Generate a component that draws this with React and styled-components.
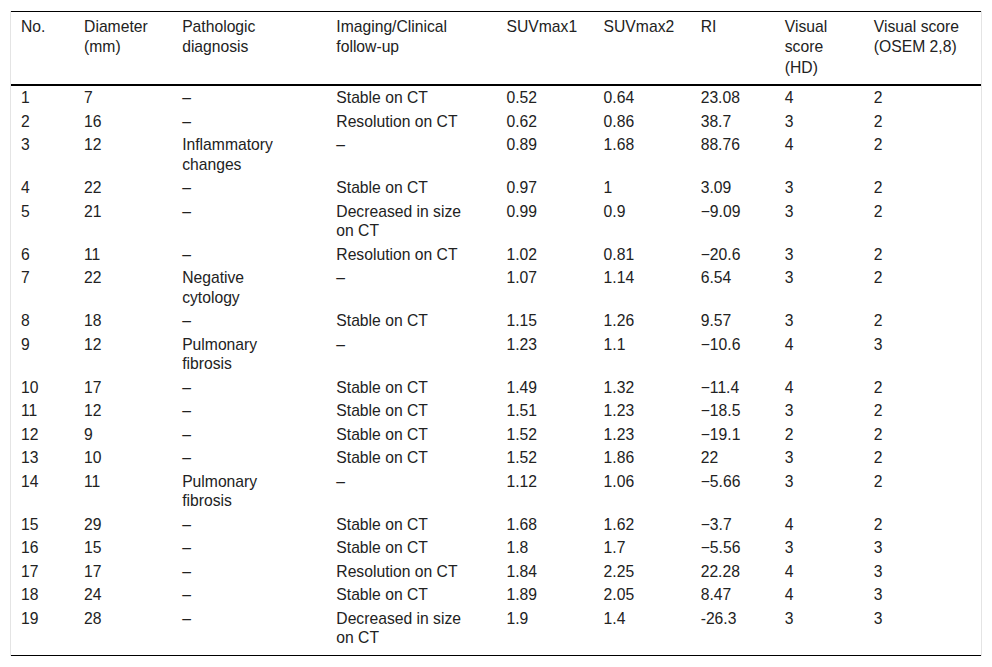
import React from "react";
import styled, { createGlobalStyle } from "styled-components";

const GlobalStyle = createGlobalStyle`
  body {
    margin: 0;
    background: #fff;
    font-family: "Liberation Sans", Arial, sans-serif;
  }
`;

const columns = [63, 98, 154, 170, 97, 97, 84, 89, 117];

const headers = [
  "No.",
  "Diameter (mm)",
  "Pathologic diagnosis",
  "Imaging/Clinical follow-up",
  "SUVmax1",
  "SUVmax2",
  "RI",
  "Visual score (HD)",
  "Visual score (OSEM 2,8)",
];

const rows = [
  ["1", "7", "–", "Stable on CT", "0.52", "0.64", "23.08", "4", "2"],
  ["2", "16", "–", "Resolution on CT", "0.62", "0.86", "38.7", "3", "2"],
  ["3", "12", "Inflammatory changes", "–", "0.89", "1.68", "88.76", "4", "2"],
  ["4", "22", "–", "Stable on CT", "0.97", "1", "3.09", "3", "2"],
  ["5", "21", "–", "Decreased in size on CT", "0.99", "0.9", "−9.09", "3", "2"],
  ["6", "11", "–", "Resolution on CT", "1.02", "0.81", "−20.6", "3", "2"],
  ["7", "22", "Negative cytology", "–", "1.07", "1.14", "6.54", "3", "2"],
  ["8", "18", "–", "Stable on CT", "1.15", "1.26", "9.57", "3", "2"],
  ["9", "12", "Pulmonary fibrosis", "–", "1.23", "1.1", "−10.6", "4", "3"],
  ["10", "17", "–", "Stable on CT", "1.49", "1.32", "−11.4", "4", "2"],
  ["11", "12", "–", "Stable on CT", "1.51", "1.23", "−18.5", "3", "2"],
  ["12", "9", "–", "Stable on CT", "1.52", "1.23", "−19.1", "2", "2"],
  ["13", "10", "–", "Stable on CT", "1.52", "1.86", "22", "3", "2"],
  ["14", "11", "Pulmonary fibrosis", "–", "1.12", "1.06", "−5.66", "3", "2"],
  ["15", "29", "–", "Stable on CT", "1.68", "1.62", "−3.7", "4", "2"],
  ["16", "15", "–", "Stable on CT", "1.8", "1.7", "−5.56", "3", "3"],
  ["17", "17", "–", "Resolution on CT", "1.84", "2.25", "22.28", "4", "3"],
  ["18", "24", "–", "Stable on CT", "1.89", "2.05", "8.47", "4", "3"],
  ["19", "28", "–", "Decreased in size on CT", "1.9", "1.4", "-26.3", "3", "3"],
];

export default function App() {
  return (
    <>
      <GlobalStyle />
      <Frame>
        <Table>
          <colgroup>
            {columns.map((w, i) => (
              <col key={i} style={{ width: w }} />
            ))}
          </colgroup>
          <thead>
            <tr>
              {headers.map((h) => (
                <Th key={h}>{h}</Th>
              ))}
            </tr>
          </thead>
          <tbody>
            {rows.map((r, i) => (
              <Tr key={i} $last={i === rows.length - 1}>
                {r.map((c, j) => (
                  <Td key={j}>{c}</Td>
                ))}
              </Tr>
            ))}
          </tbody>
        </Table>
      </Frame>
    </>
  );
}

const Frame = styled.div`
  margin: 11px 0 0 10px;
  width: 970px;
  border-left: 1px solid #e4e4e4;
  border-right: 1px solid #e4e4e4;
`;

const Table = styled.table`
  width: 970px;
  table-layout: fixed;
  border-collapse: collapse;
  border-top: 1px solid #000;
  border-bottom: 1px solid #000;
  font-size: 15.7px;
  line-height: 19.5px;
  color: #222;
`;

const Th = styled.th`
  text-align: left;
  vertical-align: top;
  font-weight: normal;
  line-height: 20.3px;
  padding: 5px 24px 6.5px 10px;
  border-bottom: 2px solid #000;

  &:last-child {
    padding-right: 10px;
  }
`;

const Tr = styled.tr`
  td {
    padding-bottom: ${(p) => (p.$last ? "7px" : "2px")};
  }
`;

const Td = styled.td`
  text-align: left;
  vertical-align: top;
  padding: 2px 24px 2px 10px;

  &:last-child {
    padding-right: 10px;
  }
`;
